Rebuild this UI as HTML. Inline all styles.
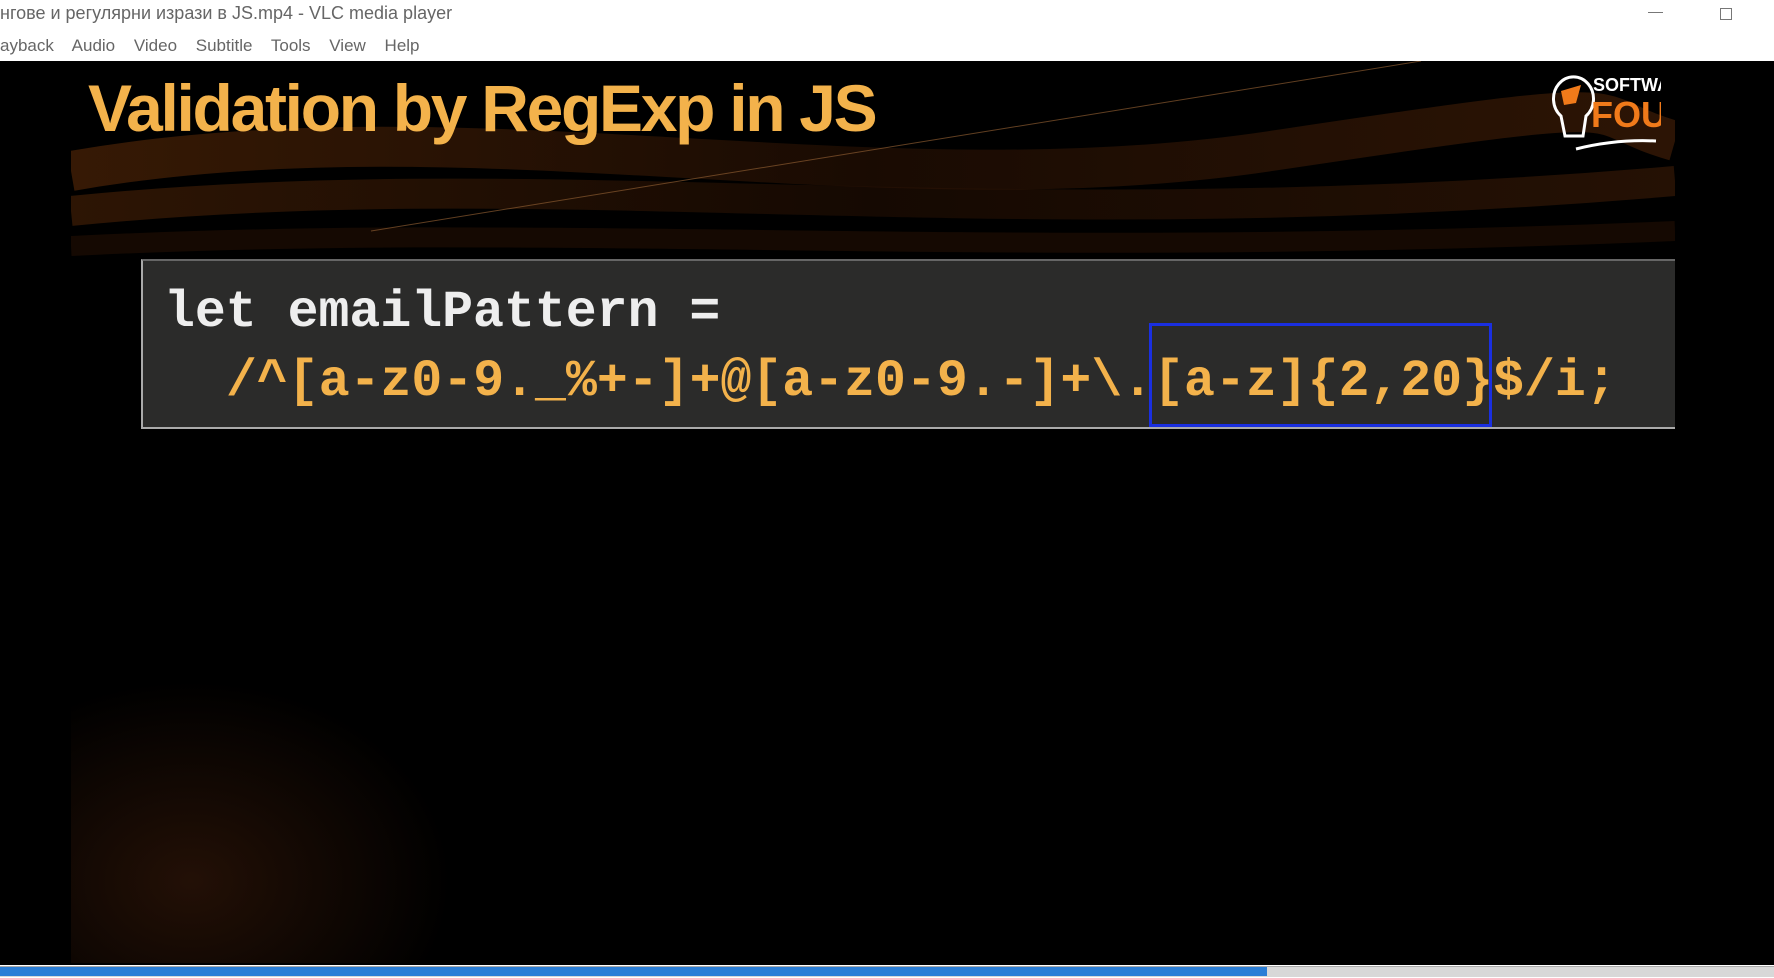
<!DOCTYPE html>
<html><head><meta charset="utf-8"><style>
body{margin:0;width:1774px;height:978px;background:#fff;position:relative;overflow:hidden;font-family:"Liberation Sans",sans-serif}
.t{position:absolute;left:0;top:3px;font-size:18px;color:#666}
.m{position:absolute;top:36px;font-size:17px;color:#666;left:0;word-spacing:14px}
.v{position:absolute;left:0;top:61px;width:1774px;height:904px;background:#000}
.slide{position:absolute;left:71px;top:61px;width:1604px;height:902px;background:radial-gradient(ellipse 260px 200px at 120px 820px,#231006,transparent),linear-gradient(#000,#000)}
.h{position:absolute;left:88px;top:70px;font-size:66px;font-weight:bold;color:#f3b24b;letter-spacing:-2.3px}
.code{position:absolute;left:141px;top:259px;width:1534px;height:170px;background:#2b2b2a;border:2px solid #aaa;border-top-color:#666;border-right:none;box-sizing:border-box}
.c{position:absolute;font-family:"Liberation Mono",monospace;font-size:51.5px;font-weight:bold;white-space:pre}
.box{position:absolute;left:1149px;top:323px;width:343px;height:104px;border:3px solid #1a2fe0;box-sizing:border-box}
.pb{position:absolute;left:0;top:966px;width:1774px;height:10px;background:#d8d8d8;border-top:1px solid #aaa}
.pf{position:absolute;left:0;top:967px;width:1267px;height:9px;background:#2b7ed6}
</style></head><body>
<div class="t">нгове и регулярни изрази в JS.mp4 - VLC media player</div>
<div style="position:absolute;left:1648px;top:12px;width:15px;height:1px;background:#777"></div>
<div style="position:absolute;left:1720px;top:8px;width:10px;height:10px;border:1px solid #777"></div>
<div class="m">ayback Audio Video Subtitle Tools View Help</div>
<div class="v"></div>
<div class="slide">
<svg width="1604" height="300" style="position:absolute;left:0;top:0">
<defs><linearGradient id="g" x1="0" x2="1"><stop offset="0" stop-color="#5a2a08"/><stop offset=".5" stop-color="#2a1204"/><stop offset="1" stop-color="#4a2208"/></linearGradient></defs>
<path d="M0 110 C400 40 800 150 1200 90 S1500 50 1604 80" stroke="url(#g)" stroke-width="40" fill="none" opacity=".6"/>
<path d="M0 150 C500 100 900 180 1604 120" stroke="url(#g)" stroke-width="30" fill="none" opacity=".5"/>
<path d="M0 185 C500 160 900 200 1604 170" stroke="#2a1204" stroke-width="20" fill="none" opacity=".5"/>
<path d="M300 170 L1350 0" stroke="#8a5a30" stroke-width="1" opacity=".7"/></svg>
<svg width="160" height="100" style="position:absolute;left:1430px;top:0"><path d="M60 55 a20 22 0 1 1 25 0 l-3 20 h-18 z" fill="none" stroke="#fff" stroke-width="3"/><path d="M60 30 l20 -6 l-5 18 l-12 2z" fill="#f07a1a"/><text x="92" y="30" fill="#fff" font-size="18" font-weight="bold" font-family="Liberation Sans">SOFTWA</text><text x="90" y="66" fill="#f07a1a" font-size="36" font-weight="bold" font-family="Liberation Sans">FOU</text><path d="M75 88 q40 -10 80 -8" stroke="#fff" stroke-width="3" fill="none"/></svg>
</div>
<div class="h">Validation by RegExp in JS</div>
<div class="code"></div>
<div class="c" style="left:164px;top:284px;color:#eee">let emailPattern =</div>
<div class="c" style="left:226px;top:353px;color:#f3b24b">/^[a-z0-9._%+-]+@[a-z0-9.-]+\.[a-z]{2,20}$/i;</div>
<div class="box"></div>
<div class="pb"></div><div class="pf"></div>
</body></html>
